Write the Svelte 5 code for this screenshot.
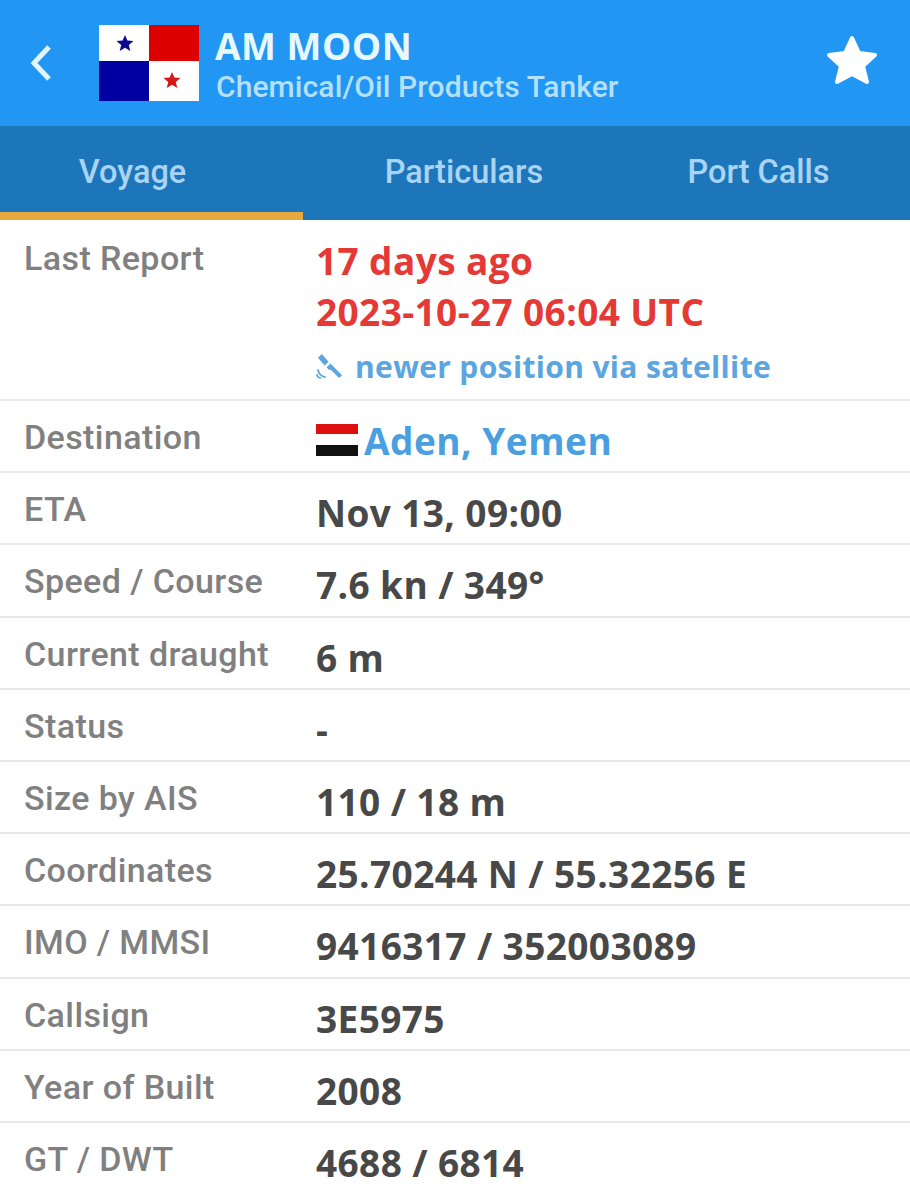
<script lang="ts">
    interface Row {
        label: string
        value: string
    }
    const tabs = ['Voyage', 'Particulars', 'Port Calls']
    const rows: Row[] = [
        { label: 'ETA', value: 'Nov 13, 09:00' },
        { label: 'Speed / Course', value: '7.6 kn / 349°' },
        { label: 'Current draught', value: '6 m' },
        { label: 'Status', value: '-' },
        { label: 'Size by AIS', value: '110 / 18 m' },
        { label: 'Coordinates', value: '25.70244 N / 55.32256 E' },
        { label: 'IMO / MMSI', value: '9416317 / 352003089' },
        { label: 'Callsign', value: '3E5975' },
        { label: 'Year of Built', value: '2008' },
        { label: 'GT / DWT', value: '4688 / 6814' }
    ]
</script>

<div class="page">
    <header>
        <svg class="back" viewBox="0 0 24 38" width="24" height="38" aria-hidden="true">
            <path d="M20 3 L5 19 L20 35" fill="none" stroke="#e3f4ff" stroke-width="5"/>
        </svg>
        <svg class="flag" viewBox="0 0 100 76" width="100" height="76" aria-hidden="true">
            <rect width="100" height="76" fill="#fff"/>
            <rect x="50" width="50" height="36" fill="#dd0000"/>
            <rect y="36" width="50" height="40" fill="#0000a0"/>
            <polygon points="26,10 28.4,15.6 34.5,16 29.8,20 31.3,26 26,22.7 20.7,26 22.2,20 17.5,16 23.6,15.6" fill="#0a0a90"/>
            <polygon points="73,47 75.4,52.6 81.5,53 76.8,57 78.3,63 73,59.7 67.7,63 69.2,57 64.5,53 70.6,52.6" fill="#d81818"/>
        </svg>
        <div class="title">
            <h1>AM MOON</h1>
            <p>Chemical/Oil Products Tanker</p>
        </div>
        <svg class="fav" viewBox="0 0 52 50" width="52" height="50" aria-hidden="true">
            <path d="M26 3 L33 18 L49 20 L37 31 L41 47 L26 39 L11 47 L15 31 L3 20 L19 18 Z" fill="#fff" stroke="#fff" stroke-width="4" stroke-linejoin="round"/>
        </svg>
    </header>

    <nav>
        {#each tabs as tab, i}
            <div class="tab" class:active={i === 0}>{tab}</div>
        {/each}
    </nav>

    <section class="row first">
        <div class="label">Last Report</div>
        <div class="value">
            <div class="red">17 days ago</div>
            <div class="red">2023-10-27 06:04 UTC</div>
            <div class="sat">
                <svg viewBox="0 0 28 28" width="27" height="27" aria-hidden="true">
                    <path d="M6 1 L2 5 L9 13 L13 9 Z M11 15 L15 11 L18 14 L27 23 L24 26 L15 17 L14 18 Z" fill="#5ba6e0"/>
                    <path d="M2 17 a9 9 0 0 0 8 8 M1 22 a4 4 0 0 0 4 4" fill="none" stroke="#5ba6e0" stroke-width="2"/>
                </svg>
                newer position via satellite
            </div>
        </div>
    </section>

    <section class="row">
        <div class="label">Destination</div>
        <div class="value dest">
            <svg viewBox="0 0 42 32" width="42" height="32" aria-hidden="true">
                <rect width="42" height="10" fill="#dd1010"/>
                <rect y="10" width="42" height="11" fill="#fff"/>
                <rect y="21" width="42" height="11" fill="#111"/>
            </svg>
            <span>Aden, Yemen</span>
        </div>
    </section>

    {#each rows as row}
        <section class="row">
            <div class="label">{row.label}</div>
            <div class="value">{row.value}</div>
        </section>
    {/each}
</div>

<style>
    :global(body) {
        margin: 0;
        background: #fff;
    }
    .page {
        width: 910px;
        height: 1200px;
        overflow: hidden;
        background: #fff;
    }
    header {
        height: 126px;
        background: #2196f3;
        display: flex;
        align-items: center;
        box-sizing: border-box;
        padding: 0 32px 0 29px;
    }
    .flag {
        margin-left: 46px;
        margin-top: -1px;
    }
    .fav {
        margin-top: -7px;
    }
    .title {
        margin-left: 16px;
        padding-top: 3px;
        flex: 1;
        font-family: "Roboto", sans-serif;
    }
    h1 {
        margin: 0;
        font-family: "Open Sans", sans-serif;
        font-size: 37px;
        line-height: 42px;
        font-weight: 700;
        letter-spacing: 0.5px;
        color: #e8f8ff;
    }
    .title p {
        margin: 2px 0 0 1px;
        font-size: 30px;
        font-weight: 500;
        line-height: 36px;
        letter-spacing: 0.1px;
        color: #b5e0fb;
    }
    nav {
        height: 94px;
        background: #1e76ba;
        display: grid;
        grid-template-columns: 303px 1fr 303px;
    }
    .tab {
        height: 94px;
        box-sizing: border-box;
        text-align: center;
        font-family: "Roboto", sans-serif;
        font-size: 32.5px;
        font-weight: 500;
        line-height: 92px;
        color: #a9d4f3;
    }
    .tab.active {
        border-bottom: 8px solid #e8a93c;
        padding-right: 38px;
    }
    .tab:nth-child(2) {
        padding-left: 18px;
    }
    .row {
        height: 72.2px;
        box-sizing: border-box;
        border-bottom: 2px solid #e9e9e9;
        display: grid;
        grid-template-columns: 292px 1fr;
        padding-left: 24px;
    }
    .row:last-child {
        border-bottom: none;
    }
    .row.first {
        height: 181px;
    }
    .label {
        font-family: "Roboto", sans-serif;
        font-size: 34px;
        font-weight: 500;
        letter-spacing: 0.4px;
        line-height: 72px;
        color: #808080;
        white-space: nowrap;
    }
    .first .label {
        line-height: 76px;
    }
    .value {
        font-family: "Open Sans", sans-serif;
        font-size: 37px;
        font-weight: 700;
        letter-spacing: 0.4px;
        line-height: 79px;
        color: #484848;
    }
    .red {
        color: #e53935;
        line-height: 51px;
    }
    .first .value {
        padding-top: 15px;
    }
    .sat {
        display: flex;
        align-items: center;
        gap: 12px;
        font-size: 30px;
        letter-spacing: 0.35px;
        line-height: 59px;
        color: #5ba6e0;
    }
    .dest {
        display: flex;
        align-items: center;
        gap: 6px;
        color: #4a9fe0;
        font-size: 37px;
        letter-spacing: 0.5px;
        margin-top: 3px;
        height: 72px;
    }
</style>
